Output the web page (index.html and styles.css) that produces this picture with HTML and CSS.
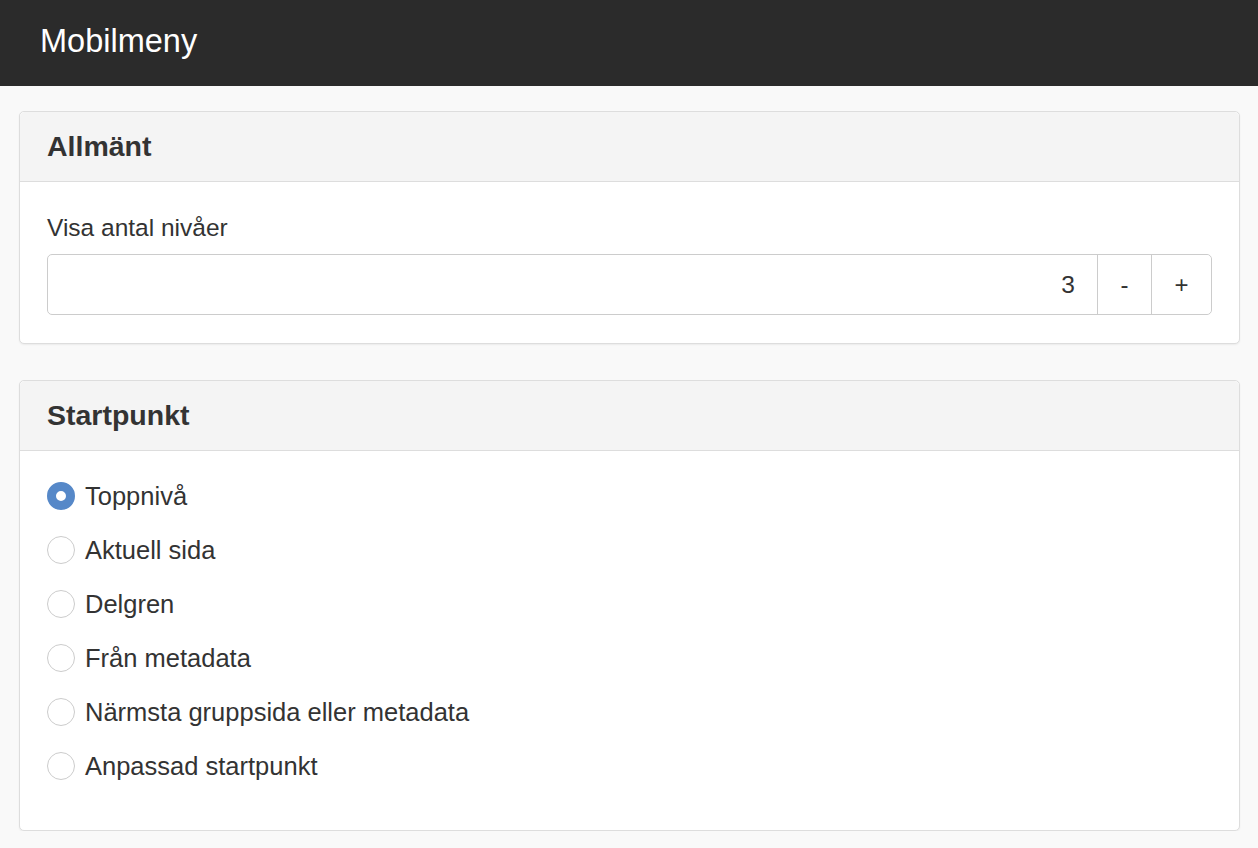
FILE: index.html
```html
<!DOCTYPE html>
<html lang="sv">
<head>
    <meta charset="UTF-8">
    <meta name="viewport" content="width=device-width, initial-scale=1.0">
    <title>Mobilmeny</title>
    <link rel="stylesheet" href="styles.css">
</head>
<body>
    <header class="topbar">
        <h1>Mobilmeny</h1>
    </header>

    <main class="content">
        <section class="panel">
            <div class="panel-heading"><h2>Allmänt</h2></div>
            <div class="panel-body">
                <label class="field-label" for="levels">Visa antal nivåer</label>
                <div class="input-group">
                    <input type="text" id="levels" value="3">
                    <button type="button">-</button>
                    <button type="button">+</button>
                </div>
            </div>
        </section>

        <section class="panel">
            <div class="panel-heading"><h2>Startpunkt</h2></div>
            <div class="panel-body radios">
                <label class="radio"><input type="radio" name="start" checked><span>Toppnivå</span></label>
                <label class="radio"><input type="radio" name="start"><span>Aktuell sida</span></label>
                <label class="radio"><input type="radio" name="start"><span>Delgren</span></label>
                <label class="radio"><input type="radio" name="start"><span>Från metadata</span></label>
                <label class="radio"><input type="radio" name="start"><span>Närmsta gruppsida eller metadata</span></label>
                <label class="radio"><input type="radio" name="start"><span>Anpassad startpunkt</span></label>
            </div>
        </section>
    </main>
</body>
</html>
```

FILE: styles.css
```css
* { box-sizing: border-box; }
body { margin: 0; background: #f9f9f9; color: #333; font-family: "Liberation Sans", Arial, sans-serif; }

.topbar { height: 86px; background: #2b2b2b; padding: 0 40px 4px; display: flex; align-items: center; }
.topbar h1 { margin: 0; color: #fff; font-size: 32.5px; font-weight: normal; }

.content { padding: 25px 18px 0 19px; display: flex; flex-direction: column; gap: 36px; }

.panel { background: #fff; border: 1px solid #ddd; border-radius: 5px; box-shadow: 0 1px 2px rgba(0, 0, 0, 0.06); }
.panel-heading { height: 70px; background: #f4f4f4; border-bottom: 1px solid #ddd; border-radius: 5px 5px 0 0; padding: 0 27px; display: flex; align-items: center; }
.panel-heading h2 { margin: 0; font-size: 28.5px; font-weight: bold; color: #333; }
.panel-body { padding: 31px 27px 28px; }

.field-label { display: block; font-size: 24.5px; line-height: 30px; margin-bottom: 11px; }
.input-group { display: flex; height: 61px; border: 1px solid #ccc; border-radius: 5px; }
.input-group input { flex: 1; min-width: 0; border: none; background: transparent; text-align: right; padding: 0 22px; font: inherit; font-size: 24.5px; color: #333; border-radius: 5px 0 0 5px; }
.input-group button { width: 54px; border: none; border-left: 1px solid #ccc; background: #fff; font: inherit; font-size: 24px; color: #333; padding: 0; }
.input-group button:last-child { width: 60px; border-radius: 0 5px 5px 0; }

.radios { padding: 31px 27px 50px; display: flex; flex-direction: column; gap: 26px; }
.radio { display: flex; align-items: center; gap: 10px; font-size: 25.5px; height: 28px; }
.radio input { appearance: none; margin: 0; width: 28px; height: 28px; border: 1px solid #ccc; border-radius: 50%; background: #fff; }
.radio input:checked { background: #fff; border: 9px solid #5688c8; }
```
